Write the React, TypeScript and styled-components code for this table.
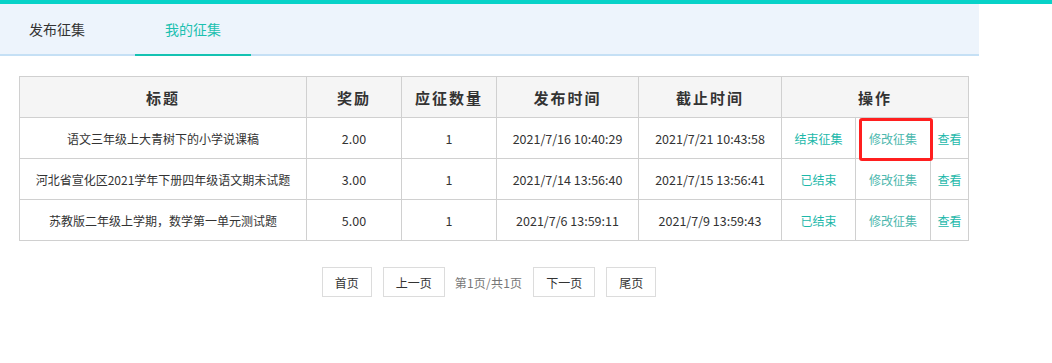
import React from 'react'
import styled, { createGlobalStyle } from 'styled-components'

const GlobalStyle = createGlobalStyle`
	html, body {
		margin: 0;
		padding: 0;
		background: #fff;
	}
	body {
		font-family: "Noto Sans CJK SC", "Noto Sans", sans-serif;
		color: #333;
	}
`

const Page = styled.div`
	width: 1052px;
	height: 363px;
	border-top: 4px solid #07d2c8;
	box-sizing: border-box;
`

const TabBar = styled.nav`
	width: 979px;
	height: 52px;
	background: #edf4fc;
	border-bottom: 2px solid #c5e0f5;
	display: flex;
	align-items: stretch;
	gap: 20px;
	box-sizing: border-box;
`

const Tab = styled.div<{ $active?: boolean }>`
	padding: 0 30px;
	margin-bottom: -2px;
	display: flex;
	align-items: center;
	font-size: 14px;
	color: ${p => (p.$active ? '#1cc0b0' : '#333')};
	border-bottom: 2px solid ${p => (p.$active ? '#14c2b2' : 'transparent')};
	&:first-child {
		margin-left: -1px;
	}
`

const Content = styled.div`
	width: 979px;
	padding-top: 20px;
`

const Table = styled.table`
	margin-left: 19px;
	width: 949px;
	border-collapse: collapse;
	table-layout: fixed;
	font-size: 12px;
`

const Th = styled.th`
	height: 40px;
	padding: 0;
	background: #f5f5f5;
	border: 1px solid #d0d0d0;
	font-size: 15px;
	font-weight: bold;
	letter-spacing: 2px;
	color: #333;
`

const Td = styled.td`
	height: 40px;
	padding: 0;
	border: 1px solid #d0d0d0;
	text-align: center;
	color: #333;
	position: relative;
`

const Figure = styled.span`
	font-size: 12.5px;
`

const ActionLink = styled.a<{ $muted?: boolean }>`
	color: ${p => (p.$muted ? '#4cb8ae' : '#1cb8aa')};
	text-decoration: none;
	font-size: 12px;
`

const Highlight = styled.span`
	position: absolute;
	left: 3px;
	top: 0;
	width: 74px;
	height: 43px;
	border: 3px solid #ff1f1f;
	border-radius: 3px;
	box-sizing: border-box;
`

const Pager = styled.div`
	margin-top: 26px;
	padding-right: 1px;
	display: flex;
	justify-content: center;
	align-items: center;
	gap: 11px;
`

const PageButton = styled.button<{ $wide?: boolean }>`
	height: 30px;
	width: ${p => (p.$wide ? 62 : 50)}px;
	background: #fff;
	border: 1px solid #dcdcdc;
	font-family: inherit;
	font-size: 12px;
	color: #333;
	padding: 0;
`

const PageInfo = styled.span`
	font-size: 12px;
	color: #777;
	margin: 0 0 0 -1px;
	letter-spacing: 0.2px;
`

interface Collection {
	title: string
	reward: string
	count: number
	published: string
	deadline: string
	ended: boolean
}

const rows: Collection[] = [
	{ title: '语文三年级上大青树下的小学说课稿', reward: '2.00', count: 1, published: '2021/7/16 10:40:29', deadline: '2021/7/21 10:43:58', ended: false },
	{ title: '河北省宣化区2021学年下册四年级语文期末试题', reward: '3.00', count: 1, published: '2021/7/14 13:56:40', deadline: '2021/7/15 13:56:41', ended: true },
	{ title: '苏教版二年级上学期，数学第一单元测试题', reward: '5.00', count: 1, published: '2021/7/6 13:59:11', deadline: '2021/7/9 13:59:43', ended: true },
]

const colWidths = [287, 95, 95, 142, 143, 74, 75, 38]

export default function App() {
	return (
		<>
			<GlobalStyle />
			<Page>
				<TabBar>
					<Tab>发布征集</Tab>
					<Tab $active>我的征集</Tab>
				</TabBar>
				<Content>
					<Table>
						<colgroup>
							{colWidths.map((w, i) => <col key={i} style={{ width: w }} />)}
						</colgroup>
						<thead>
							<tr>
								<Th>标题</Th>
								<Th>奖励</Th>
								<Th>应征数量</Th>
								<Th>发布时间</Th>
								<Th>截止时间</Th>
								<Th colSpan={3}>操作</Th>
							</tr>
						</thead>
						<tbody>
							{rows.map((row, i) => (
								<tr key={i}>
									<Td>{row.title}</Td>
									<Td><Figure>{row.reward}</Figure></Td>
									<Td><Figure>{row.count}</Figure></Td>
									<Td><Figure>{row.published}</Figure></Td>
									<Td><Figure>{row.deadline}</Figure></Td>
									<Td>
										<ActionLink>{row.ended ? '已结束' : '结束征集'}</ActionLink>
									</Td>
									<Td>
										{i === 0 && <Highlight />}
										<ActionLink $muted>修改征集</ActionLink>
									</Td>
									<Td>
										<ActionLink>查看</ActionLink>
									</Td>
								</tr>
							))}
						</tbody>
					</Table>
					<Pager>
						<PageButton>首页</PageButton>
						<PageButton $wide>上一页</PageButton>
						<PageInfo>第1页/共1页</PageInfo>
						<PageButton $wide>下一页</PageButton>
						<PageButton>尾页</PageButton>
					</Pager>
				</Content>
			</Page>
		</>
	)
}
